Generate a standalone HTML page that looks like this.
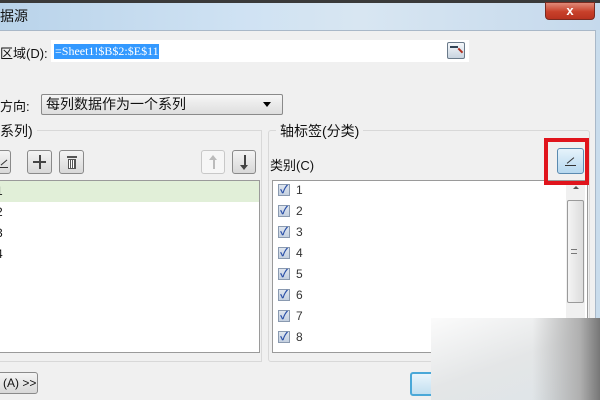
<!DOCTYPE html><html><head><meta charset="utf-8"><style>
*{margin:0;padding:0;box-sizing:border-box}
body{width:600px;height:400px;overflow:hidden;position:relative;background:#f0f0f0;font-family:"Liberation Sans","Noto Sans CJK SC",sans-serif;font-size:13px;color:#111}
.a{position:absolute}
.btn{position:absolute;border:1px solid #8a8a8a;border-radius:3px;background:linear-gradient(#f4f4f4,#d8d8d8);}
.cb{position:absolute;left:278px;width:12px;height:12px;border:1px solid #8a9ab0;background:linear-gradient(#dfe6ef,#c4d0e0);color:#2b50a8;font-size:11px;line-height:10px;text-align:center;font-weight:bold}
.n{position:absolute;left:296px;font-size:12px;color:#333}
</style></head><body>
<div class="a" style="left:0;top:0;width:600px;height:30px;background:linear-gradient(90deg,#b9d3ea,#cfe2f3 40%,#d8e6f2 60%,#c5d9ec)"></div>
<div class="a" style="left:0;top:0;width:600px;height:3px;background:#3a3a3a"></div>
<div class="a" style="left:0;top:6px;font-size:14px">据源</div>
<div class="a" style="left:545px;top:2px;width:50px;height:18px;border:1px solid #7a2a20;border-radius:0 0 4px 4px;background:linear-gradient(#e08a78,#c8402a 55%,#b83220);color:#fff;text-align:center;font-weight:bold;font-size:13px;line-height:15px">x</div>
<div class="a" style="left:0;top:30px;width:596px;height:370px;background:#f0f0f0;border-top:1px solid #a9b8c8;border-right:1px solid #a9b8c8"></div>
<div class="a" style="left:596px;top:30px;width:4px;height:370px;background:#c9dcec"></div>
<div class="a" style="left:0;top:43px;font-size:13px">区域(D):</div>
<div class="a" style="left:51px;top:40px;width:418px;height:22px;background:#fff"></div>
<div class="a" style="left:54px;top:44px;width:105px;height:15px;background:#3399ff;color:#fff;font-family:'Liberation Serif',serif;font-size:12px;padding:0 1px;line-height:15px;white-space:nowrap;overflow:hidden">=Sheet1!$B$2:$E$11</div>
<div class="a" style="left:447px;top:42px;width:18px;height:17px;border:1px solid #6a7a8a;border-radius:2px;background:linear-gradient(#f5f8fb,#c8d4e0)"><div class="a" style="left:2px;top:3px;width:8px;height:2px;background:#345"></div><div class="a" style="left:8px;top:6px;width:6px;height:6px;border-right:2px solid #b03020;transform:rotate(-45deg)"></div></div>
<div class="a" style="left:0;top:96px;font-size:13px">方向:</div>
<div class="a" style="left:41px;top:94px;width:242px;height:21px;border:1px solid #8a8a8a;border-radius:2px;background:linear-gradient(#f6f6f6,#dedede);font-size:14px;padding-left:4px;line-height:19px">每列数据作为一个系列</div>
<div class="a" style="left:263px;top:102px;width:0;height:0;border-left:4px solid transparent;border-right:4px solid transparent;border-top:5px solid #000"></div>
<div class="a" style="left:0;top:130px;width:262px;height:232px;border:1px solid #d8d8d8;border-left:none"></div>
<div class="a" style="left:268px;top:130px;width:322px;height:232px;border:1px solid #d8d8d8;border-radius:3px"></div>
<div class="a" style="left:0;top:121px;font-size:14px;background:#f0f0f0;padding-right:4px">系列)</div>
<div class="a" style="left:276px;top:121px;font-size:14px;background:#f0f0f0;padding:0 4px">轴标签(分类)</div>
<div class="btn" style="left:-4px;top:150px;width:15px;height:24px"><div class="a" style="left:3px;top:11px;width:8px;height:1px;background:#333;transform:rotate(-40deg)"></div><div class="a" style="left:2px;top:16px;width:9px;height:1px;background:#333"></div></div>
<div class="btn" style="left:27px;top:150px;width:25px;height:24px"><div class="a" style="left:5px;top:10px;width:13px;height:2px;background:#444"></div><div class="a" style="left:10.5px;top:4px;width:2px;height:14px;background:#444"></div></div>
<div class="btn" style="left:59px;top:150px;width:25px;height:24px"><div class="a" style="left:7px;top:5px;width:10px;height:2px;background:#555"></div><div class="a" style="left:8px;top:8px;width:8px;height:10px;border:1px solid #555;background:repeating-linear-gradient(90deg,#fff 0 1px,#555 1px 2px)"></div></div>
<div class="btn" style="left:201px;top:150px;width:24px;height:24px;background:#f6f6f6;border-color:#c8c8c8"><div class="a" style="left:10.5px;top:7px;width:2px;height:11px;background:#bbb"></div><div class="a" style="left:7px;top:4px;border-left:4.5px solid transparent;border-right:4.5px solid transparent;border-bottom:5px solid #bbb"></div></div>
<div class="btn" style="left:232px;top:150px;width:24px;height:24px"><div class="a" style="left:10.5px;top:4px;width:2px;height:11px;background:#444"></div><div class="a" style="left:7px;top:14px;border-left:4.5px solid transparent;border-right:4.5px solid transparent;border-top:5px solid #444"></div></div>
<div class="a" style="left:270px;top:155px;font-size:13px">类别(C)</div>
<div class="a" style="left:0;top:180px;width:260px;height:173px;background:#fff;border:1px solid #9a9a9a;border-left:none"></div>
<div class="a" style="left:0;top:181px;width:259px;height:21px;background:#e1efd8"></div>
<div class="a" style="left:-4px;top:184px;font-size:12px">1</div>
<div class="a" style="left:-4px;top:205px;font-size:12px">2</div>
<div class="a" style="left:-4px;top:226px;font-size:12px">3</div>
<div class="a" style="left:-4px;top:247px;font-size:12px">4</div>
<div class="a" style="left:272px;top:180px;width:316px;height:173px;background:#fff;border:1px solid #9a9a9a"></div>
<div class="a" style="left:566px;top:181px;width:19px;height:171px;background:#f0f0f0"></div>
<div class="a" style="left:567px;top:200px;width:17px;height:103px;border:1px solid #9a9a9a;border-radius:2px;background:linear-gradient(90deg,#f4f4f4,#dcdcdc)"></div>
<div class="a" style="left:571px;top:249px;width:6px;height:5px;border-top:1px solid #777;border-bottom:1px solid #777"></div>
<div class="a" style="left:573px;top:186px;width:0;height:0;border-left:3px solid transparent;border-right:3px solid transparent;border-bottom:3px solid #555"></div>
<div class="a" style="left:544px;top:138px;width:45px;height:47px;border:4px solid #e0141c"></div>
<div class="a" style="left:557px;top:148px;width:27px;height:26px;border:1px solid #5a8ab0;border-radius:3px;background:linear-gradient(#e6f3fb,#b6d8ef)"><div class="a" style="left:8px;top:11px;width:9px;height:1px;background:#333;transform:rotate(-40deg)"></div><div class="a" style="left:7px;top:16px;width:11px;height:1px;background:#333"></div></div>
<div class="cb" style="top:184px">✓</div><div class="n" style="top:183px">1</div>
<div class="cb" style="top:205px">✓</div><div class="n" style="top:204px">2</div>
<div class="cb" style="top:226px">✓</div><div class="n" style="top:225px">3</div>
<div class="cb" style="top:247px">✓</div><div class="n" style="top:246px">4</div>
<div class="cb" style="top:268px">✓</div><div class="n" style="top:267px">5</div>
<div class="cb" style="top:289px">✓</div><div class="n" style="top:288px">6</div>
<div class="cb" style="top:310px">✓</div><div class="n" style="top:309px">7</div>
<div class="cb" style="top:331px">✓</div><div class="n" style="top:330px">8</div>
<div class="btn" style="left:-4px;top:372px;width:42px;height:22px;font-size:12px;line-height:20px;padding-left:6px">(A) &gt;&gt;</div>
<div class="btn" style="left:410px;top:372px;width:40px;height:24px;border:2px solid #4aa8d8;background:linear-gradient(#eaf5fc,#c2dff0)"></div>
<div class="a" style="left:431px;top:318px;width:169px;height:82px;background:linear-gradient(90deg,rgba(255,255,255,0) 60%,#b0b0b0 88%,#777 100%),linear-gradient(160deg,#fbfbfb,#e4e6e7 50%,#dde4e8)"></div>
</body></html>
